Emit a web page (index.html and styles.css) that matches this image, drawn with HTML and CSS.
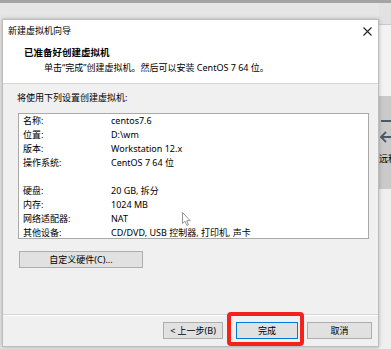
FILE: index.html
```html
<!DOCTYPE html>
<html lang="zh-CN">
<head>
    <meta charset="UTF-8">
    <title>新建虚拟机向导</title>
    <link rel="stylesheet" href="styles.css">
</head>
<body>
    <div class="screen">
        <div class="gutter"></div>

        <!-- Wizard dialog -->
        <div class="dialog">
            <div class="head">
                <div class="title-row">
                    <span>新建虚拟机向导</span>
                    <svg class="close" width="9" height="9" viewBox="0 0 9 9">
                        <path d="M0.5 0.5 L8.5 8.5 M8.5 0.5 L0.5 8.5" stroke="#222" stroke-width="1.1" fill="none"/>
                    </svg>
                </div>
                <div class="heading">已准备好创建虚拟机</div>
                <div class="sub">单击“完成”创建虚拟机。然后可以安装 CentOS 7 64 位。</div>
            </div>

            <div class="body">
                <div class="lead">将使用下列设置创建虚拟机:</div>

                <div class="summary">
                    <div class="row"><span>名称:</span><span>centos7.6</span></div>
                    <div class="row"><span>位置:</span><span>D:\wm</span></div>
                    <div class="row"><span>版本:</span><span>Workstation 12.x</span></div>
                    <div class="row"><span>操作系统:</span><span>CentOS 7 64 位</span></div>
                    <div class="row blank"></div>
                    <div class="row"><span>硬盘:</span><span>20 GB, 拆分</span></div>
                    <div class="row"><span>内存:</span><span>1024 MB</span></div>
                    <div class="row"><span>网络适配器:</span><span>NAT</span></div>
                    <div class="row"><span>其他设备:</span><span>CD/DVD, USB 控制器, 打印机, 声卡</span></div>
                </div>

                <button class="btn custom">自定义硬件(C)...</button>

                <div class="footer">
                    <button class="btn prev">&lt; 上一步(B)</button>
                    <button class="btn finish">完成<span class="mark"></span></button>
                    <button class="btn cancel">取消</button>
                </div>
            </div>

            <!-- mouse pointer -->
            <svg class="cursor" width="10" height="15" viewBox="0 0 10 15">
                <path d="M0.5 0.5 L0.5 11.5 L3 9.2 L4.8 13.5 L6.4 12.8 L4.7 8.7 L8.2 8.7 Z" fill="#fff" stroke="#8a8a8a" stroke-width="0.9"/>
            </svg>
        </div>

        <!-- app window behind -->
        <div class="side">
            <div class="side-top"></div>
            <div class="side-mid"></div>
            <div class="side-panel">
                <div class="side-bar"></div>
                <svg class="side-arrow" width="12" height="12" viewBox="0 0 12 12">
                    <path d="M6 1 L1 6 L6 11 M1 6 L12 6" stroke="#4b5a68" stroke-width="1.8" fill="none"/>
                </svg>
                <div class="side-text">远程</div>
            </div>
            <div class="side-rest"></div>
        </div>
    </div>
</body>
</html>
```

FILE: styles.css
```css
* {
    margin: 0;
    padding: 0;
    box-sizing: border-box;
}
body {
    font-family: 'Noto Sans', 'Noto Sans CJK SC', sans-serif;
    font-size: 9px;
    color: #000;
    background-color: #e4e4e4;
    overflow: hidden;
}
.screen {
    display: flex;
    height: 349px;
    border-top: 3px solid #a4a4a4;
    background-color: #e6e6e6;
}
.gutter {
    width: 2px;
}
.dialog {
    position: relative;
    display: flex;
    flex-direction: column;
    margin-top: 16px;
    width: 377px;
    height: 328px;
    background-color: #f0f0f0;
    border: 1px solid #bcbcbc;
    box-shadow: 0 0 4px rgba(0, 0, 0, 0.25);
}
.head {
    height: 64px;
    background-color: #fff;
    border-bottom: 1px solid #d6d6d6;
}
.title-row {
    display: flex;
    justify-content: space-between;
    align-items: center;
    height: 16px;
    margin-top: 3px;
    padding: 0 6px 0 5px;
    line-height: 16px;
}
.heading {
    margin-top: 7px;
    padding-left: 21px;
    font-size: 9.5px;
    font-weight: bold;
    line-height: 14px;
}
.sub {
    padding-left: 41px;
    line-height: 15px;
}
.body {
    flex: 1;
    display: flex;
    flex-direction: column;
}
.lead {
    margin-top: 6px;
    padding-left: 14px;
    line-height: 16px;
}
.summary {
    margin: 7px 0 0 15px;
    width: 351px;
    height: 126px;
    background-color: #fff;
    border: 1px solid #a9a9a9;
    padding-left: 4px;
}
.row {
    display: grid;
    grid-template-columns: 88px 1fr;
    height: 14px;
    line-height: 14px;
}
.btn {
    font-family: 'Noto Sans', 'Noto Sans CJK SC', sans-serif;
    font-size: 9px;
    color: #000;
    height: 17px;
    line-height: 15px;
    background-color: #e1e1e1;
    border: 1px solid #adadad;
}
.custom {
    margin: 12px 0 0 16px;
    width: 124px;
}
.footer {
    margin-top: auto;
    height: 32px;
    display: flex;
    justify-content: flex-end;
    align-items: flex-start;
    padding: 7px 6px 0 0;
    border-top: 1px solid #d4d4d4;
    box-shadow: inset 0 1px 0 #fff;
}
.prev {
    width: 60px;
}
.finish {
    position: relative;
    width: 62px;
    margin-left: 13px;
    border-color: #0078d7;
}
.cancel {
    width: 65px;
    margin-left: 9px;
}
.mark {
    position: absolute;
    left: -10px;
    right: -7px;
    top: -11px;
    bottom: -8px;
    border: 4px solid #f5221b;
    border-radius: 4px;
}
.cursor {
    position: absolute;
    left: 179px;
    top: 192px;
}
.side {
    flex: 1;
    display: flex;
    flex-direction: column;
    overflow: hidden;
}
.side-top {
    height: 22px;
    background-color: #e2e2e2;
    border-bottom: 1px solid #c3ccd6;
}
.side-mid {
    height: 71px;
    background-color: #f3f3f3;
}
.side-panel {
    height: 93px;
    background-color: #cacaca;
    padding-top: 24px;
}
.side-bar {
    height: 2px;
    margin-left: 2px;
    background-color: #4b5a68;
}
.side-arrow {
    display: block;
    margin: 9px 0 0 1px;
}
.side-text {
    margin-top: 10px;
    white-space: nowrap;
    line-height: 12px;
}
.side-rest {
    flex: 1;
    background-color: #efefef;
}
```
